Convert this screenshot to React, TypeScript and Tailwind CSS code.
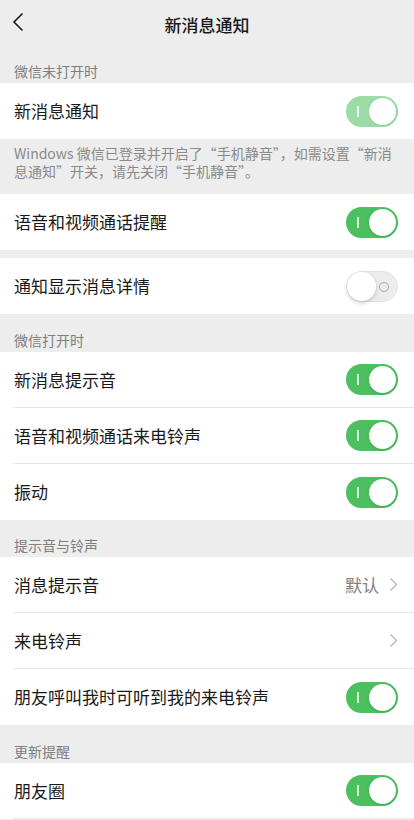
import { ReactNode } from "react";

const Toggle = ({ on, dim }: { on: boolean; dim?: boolean }) => {
  if (!on) {
    return (
      <div className="relative w-[52px] h-[31px] rounded-full bg-[#ececec] border border-[#e2e2e2] shrink-0">
        <div className="absolute right-[8px] top-[10px] w-[10px] h-[10px] rounded-full border border-[#a8a8a8]" />
        <div className="absolute left-0 top-0 w-[29px] h-[29px] rounded-full bg-white shadow-[0_2px_4px_rgba(0,0,0,0.18)]" />
      </div>
    );
  }
  return (
    <div className={`relative w-[52px] h-[31px] rounded-full bg-[#4cbf5f] shrink-0 ${dim ? "opacity-55" : ""}`}>
      <div className="absolute left-[11px] top-[10px] w-[1.5px] h-[11px] bg-white/80" />
      <div className="absolute right-[2px] top-[2px] w-[27px] h-[27px] rounded-full bg-white shadow-[0_1px_3px_rgba(0,0,0,0.15)]" />
    </div>
  );
};

const Chevron = () => (
  <svg width="9" height="15" viewBox="0 0 9 15" fill="none" className="shrink-0">
    <path d="M1.5 1.5 L7.5 7.5 L1.5 13.5" stroke="#b5b5b5" strokeWidth="1.4" />
  </svg>
);

const Label = ({ children, pt = "pt-4" }: { children: ReactNode; pt?: string }) => (
  <div className={`px-[14px] ${pt} pb-[2px] text-[14px] leading-[20px] text-[#7f7f7f]`}>{children}</div>
);

const Row = ({ title, right, last }: { title: string; right: ReactNode; last?: boolean }) => (
  <div className="pl-[13px] bg-white">
    <div className={`flex items-center justify-between h-[56px] pl-[1px] pr-4 ${last ? "" : "border-b border-[#e6e6e6]"}`}>
      <span className="text-[17px] text-[#191919]">{title}</span>
      {right}
    </div>
  </div>
);

export default function App() {
  return (
    <div className="w-[414px] h-[820px] overflow-hidden bg-[#ededed] font-['Noto_Sans_CJK_SC',sans-serif]">
      <div className="relative h-[50px] flex items-center justify-center">
        <svg width="12" height="20" viewBox="0 0 12 20" fill="none" className="absolute left-[12px] top-[12px]">
          <path d="M10.5 1.5 L2 10 L10.5 18.5" stroke="#191919" strokeWidth="1.6" />
        </svg>
        <span className="text-[17px] font-medium text-[#191919]">新消息通知</span>
      </div>

      <Label pt="pt-[11px]">微信未打开时</Label>
      <Row title="新消息通知" right={<Toggle on dim />} last />
      <div className="h-[55px] px-[14px] pt-[5px] text-[14px] leading-[18px] text-[#8a8a8a]">
        <div>Windows 微信已登录并开启了“手机静音”，如需设置“新消</div>
        <div>息通知”开关，请先关闭“手机静音”。</div>
      </div>
      <Row title="语音和视频通话提醒" right={<Toggle on />} last />
      <div className="h-[8px]" />
      <Row title="通知显示消息详情" right={<Toggle on={false} />} last />

      <Label>微信打开时</Label>
      <Row title="新消息提示音" right={<Toggle on />} />
      <Row title="语音和视频通话来电铃声" right={<Toggle on />} />
      <Row title="振动" right={<Toggle on />} last />

      <Label pt="pt-[15px]">提示音与铃声</Label>
      <Row
        title="消息提示音"
        right={
          <div className="flex items-center gap-[10px]">
            <span className="text-[17px] text-[#808080]">默认</span>
            <Chevron />
          </div>
        }
      />
      <Row title="来电铃声" right={<Chevron />} />
      <Row title="朋友呼叫我时可听到我的来电铃声" right={<Toggle on />} last />

      <Label>更新提醒</Label>
      <Row title="朋友圈" right={<Toggle on />} />
    </div>
  );
}
